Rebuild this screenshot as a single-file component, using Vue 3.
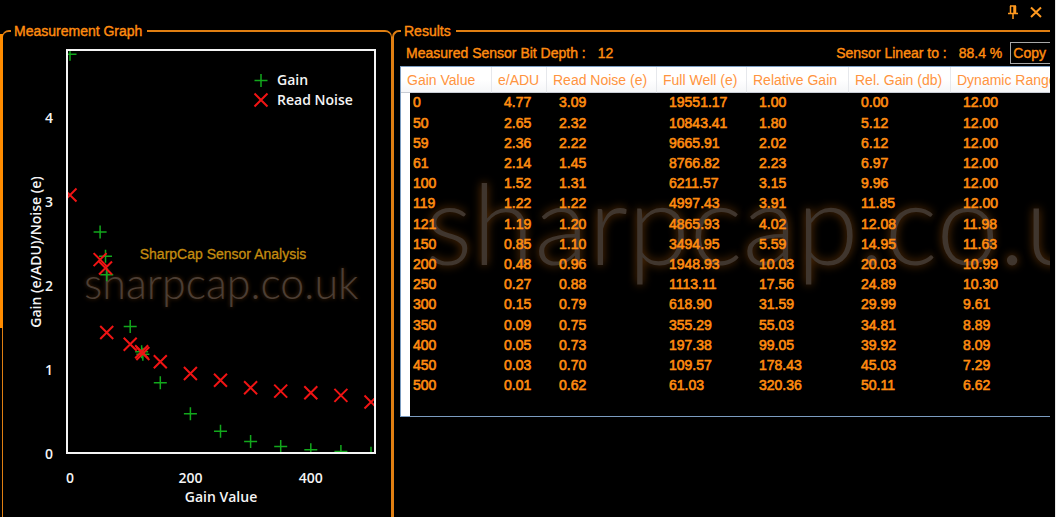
<script setup>
const headers = ['Gain Value', 'e/ADU', 'Read Noise (e)', 'Full Well (e)', 'Relative Gain', 'Rel. Gain (db)', 'Dynamic Range']

const rows = [
  ['0', '4.77', '3.09', '19551.17', '1.00', '0.00', '12.00'],
  ['50', '2.65', '2.32', '10843.41', '1.80', '5.12', '12.00'],
  ['59', '2.36', '2.22', '9665.91', '2.02', '6.12', '12.00'],
  ['61', '2.14', '1.45', '8766.82', '2.23', '6.97', '12.00'],
  ['100', '1.52', '1.31', '6211.57', '3.15', '9.96', '12.00'],
  ['119', '1.22', '1.22', '4997.43', '3.91', '11.85', '12.00'],
  ['121', '1.19', '1.20', '4865.93', '4.02', '12.08', '11.98'],
  ['150', '0.85', '1.10', '3494.95', '5.59', '14.95', '11.63'],
  ['200', '0.48', '0.96', '1948.93', '10.03', '20.03', '10.99'],
  ['250', '0.27', '0.88', '1113.11', '17.56', '24.89', '10.30'],
  ['300', '0.15', '0.79', '618.90', '31.59', '29.99', '9.61'],
  ['350', '0.09', '0.75', '355.29', '55.03', '34.81', '8.89'],
  ['400', '0.05', '0.73', '197.38', '99.05', '39.92', '8.09'],
  ['450', '0.03', '0.70', '109.57', '178.43', '45.03', '7.29'],
  ['500', '0.01', '0.62', '61.03', '320.36', '50.11', '6.62'],
]

const xOf = (gain) => 70 + gain * 0.602
const yOf = (value) => 454 - value * 83.8

const points = rows.map((r) => ({
  gain: Number(r[0]),
  x: xOf(Number(r[0])),
  yGain: yOf(Number(r[1])),
  yNoise: yOf(Number(r[2])),
}))
const yTicks = [0, 1, 2, 3, 4]
const xTicks = [0, 200, 400]
</script>

<template>
  <main class="window">
    <header class="titlebar">
      <button class="tool" type="button" aria-label="Pin panel">
        <svg width="10" height="14" viewBox="0 0 10 14">
          <path d="M2 1h6M2.500 1v7M6 1v7M7.500 1v7M0 8.500h10M5 9v5" fill="none" stroke="currentColor" stroke-width="1.500" />
        </svg>
      </button>
      <button class="tool" type="button" aria-label="Close panel">
        <svg width="12" height="12" viewBox="0 0 12 12">
          <path d="M1 1.500l10 9.500M11 1.500L1 11" fill="none" stroke="currentColor" stroke-width="2" />
        </svg>
      </button>
    </header>

    <div class="panels">
      <fieldset class="group graph">
        <legend>Measurement Graph</legend>
        <svg class="chart" viewBox="3 39 388 478" role="img" aria-label="Gain and read noise by gain value">
          <defs>
            <clipPath id="plot-area"><rect x="68" y="51" width="306" height="401" /></clipPath>
          </defs>

          <text class="mark" x="84" y="299">sharpcap.co.uk</text>
          <text class="caption" x="223" y="259">SharpCap Sensor Analysis</text>

          <g clip-path="url(#plot-area)">
            <path
              v-for="p in points" :key="'g' + p.gain" class="plus"
              :d="`M${p.x - 6.5} ${p.yGain}h13M${p.x} ${p.yGain - 6.5}v13`"
            />
            <path
              v-for="p in points" :key="'n' + p.gain" class="cross"
              :d="`M${p.x - 6.5} ${p.yNoise - 6.5}l13 13m0 -13l-13 13`"
            />
          </g>
          <rect class="frame" x="67" y="50" width="308" height="403" />

          <path class="plus" d="M254.500 80.500h13M261 74v13" />
          <path class="cross" d="M254.500 93.500l13 13m0 -13l-13 13" />
          <text class="label" x="277" y="85">Gain</text>
          <text class="label" x="277" y="105">Read Noise</text>

          <text v-for="t in yTicks" :key="'y' + t" class="label mid" x="49" :y="459 - t * 84">{{ t }}</text>
          <text v-for="t in xTicks" :key="'x' + t" class="label mid" :x="xOf(t)" y="483">{{ t }}</text>
          <text class="label mid" x="221" y="502">Gain Value</text>
          <text class="label mid" transform="translate(41 252) rotate(-90)">Gain (e/ADU)/Noise (e)</text>
        </svg>
      </fieldset>

      <fieldset class="group results">
        <legend>Results</legend>
        <div class="summary">
          <span>Measured Sensor Bit Depth :</span>
          <span class="value">12</span>
          <span class="linear">Sensor Linear to :</span>
          <span class="value">88.4 %</span>
          <button class="copy" type="button">Copy</button>
        </div>
        <div class="grid">
          <div class="bigmark" aria-hidden="true">sharpcap.co.uk</div>
          <table>
            <colgroup>
              <col class="c-gain"><col class="c-adu"><col class="c-noise"><col class="c-well">
              <col class="c-rel"><col class="c-rel-db"><col class="c-range">
            </colgroup>
            <thead>
              <tr><th v-for="h in headers" :key="h" scope="col">{{ h }}</th></tr>
            </thead>
            <tbody>
              <tr v-for="r in rows" :key="r[0]">
                <td v-for="(c, i) in r" :key="i">{{ c }}</td>
              </tr>
            </tbody>
          </table>
        </div>
      </fieldset>
    </div>
  </main>
</template>

<style>
body {
  background: #000;
}
</style>

<style scoped>
.window {
  position: relative;
  display: flex;
  flex-direction: column;
  box-sizing: border-box;
  height: 100vh;
  padding-right: 5px;
  border-right: 1px solid #e8e8e8;
  overflow: hidden;
  background: #000;
  color: #ff8c10;
  font: 14px/16px "Liberation Sans", Arial, sans-serif;
}
.window::before {
  content: "";
  position: absolute;
  left: 0;
  top: 34px;
  width: 3px;
  height: 294px;
  background: #ff8c00;
}
.titlebar {
  display: flex;
  justify-content: flex-end;
  align-items: center;
  gap: 12px;
  height: 23px;
  padding-right: 8px;
}
.tool {
  display: flex;
  padding: 0;
  border: 0;
  background: none;
  color: #ff9a20;
}
.panels {
  flex: 1;
  display: grid;
  grid-template-columns: 392fr 658fr;
  min-height: 0;
}
.group {
  box-sizing: border-box;
  min-width: 0;
  margin: 0;
  padding: 0;
  border: 1px solid #e07f12;
  border-top-width: 2px;
  border-bottom: 0;
}
.graph {
  margin-left: 2px;
  border-radius: 7px 7px 0 0;
}
.results {
  border-left-width: 2px;
  border-right: 0;
  border-radius: 7px 0 0 0;
  overflow: hidden;
}
legend {
  margin-left: 8px;
  padding: 0 5px 0 3px;
  -webkit-text-stroke: 0.4px currentColor;
}
.results legend {
  margin-left: 7px;
}
.chart {
  display: block;
  width: 100%;
}
.frame {
  fill: none;
  stroke: #f4f4f4;
  stroke-width: 2;
}
.plus {
  fill: none;
  stroke: #12a81c;
  stroke-width: 1.5;
}
.cross {
  fill: none;
  stroke: #f01414;
  stroke-width: 2;
}
.label {
  fill: #f4f4f4;
  font: 600 14px "Open Sans", sans-serif;
}
.mid {
  text-anchor: middle;
}
.caption {
  fill: #c48c10;
  stroke: #c48c10;
  stroke-width: 0.3px;
  text-anchor: middle;
}
.mark {
  fill: #4c3e34;
  font: 300 43px Lato, sans-serif;
  text-shadow: 0 0 4px #4a2808;
}
.summary {
  display: flex;
  align-items: center;
  height: 27px;
  padding-left: 12px;
  white-space: nowrap;
  -webkit-text-stroke: 0.4px currentColor;
}
.value {
  margin-left: 12px;
}
.linear {
  margin-left: auto;
}
.copy {
  height: 22px;
  margin-left: 8px;
  padding: 0 4px 0 2px;
  border: 1px solid #a8a8a8;
  border-right: 0;
  background: #000;
  color: inherit;
  font: inherit;
  -webkit-text-stroke: 0.4px currentColor;
}
.grid {
  position: relative;
  margin-left: 6px;
  padding-bottom: 20px;
  border: 1px solid #7b9cc0;
  border-right: 0;
  overflow: hidden;
  background: linear-gradient(90deg, #fff 9px, #000 9px);
}
.bigmark {
  position: absolute;
  left: 24px;
  top: 95px;
  color: #40362e;
  font: 300 112px/120px Lato, sans-serif;
  text-shadow: 0 0 10px #6a3808;
}
table {
  position: relative;
  width: 660px;
  table-layout: fixed;
  border-collapse: separate;
  border-spacing: 0;
}
.c-gain { width: 91px; }
.c-adu { width: 55px; }
.c-noise { width: 110px; }
.c-well { width: 90px; }
.c-rel { width: 102px; }
.c-rel-db { width: 102px; }
.c-range { width: 110px; }
th {
  box-sizing: border-box;
  height: 26px;
  padding: 0 0 0 6px;
  border-right: 1px solid #e6e8ec;
  border-bottom: 1px solid #c8ccd4;
  background: linear-gradient(#fff 50%, #f5f6f8);
  color: #ff9440;
  font-weight: 400;
  text-align: left;
  white-space: nowrap;
}
td {
  box-sizing: border-box;
  height: 20px;
  padding: 0 0 3px 12px;
  -webkit-text-stroke: 0.6px currentColor;
}
tbody tr:nth-child(5n + 1) td {
  height: 21px;
}
</style>
